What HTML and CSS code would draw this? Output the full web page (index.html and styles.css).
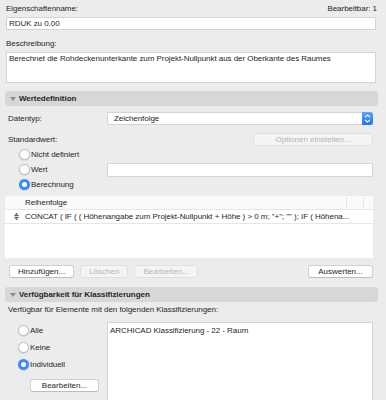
FILE: index.html
```html
<!DOCTYPE html>
<html lang="de">
<head>
    <meta charset="UTF-8">
    <title>Eigenschaft</title>
    <link rel="stylesheet" href="styles.css">
</head>
<body>
    <div class="top">
        <div class="title-row">
            <span>Eigenschaftenname:</span>
            <span>Bearbeitbar: 1</span>
        </div>
        <div class="field">RDUK zu 0.00</div>
        <div class="label">Beschreibung:</div>
        <div class="field area">Berechnet die Rohdeckenunterkante zum Projekt-Nullpunkt aus der Oberkante des Raumes</div>
    </div>

    <div class="group-head"><span class="tri"></span>Wertedefinition</div>
    <div class="group">
        <div class="form-row first">
            <span class="col-label">Datentyp:</span>
            <div class="select">
                <span>Zeichenfolge</span>
                <span class="stepper">
                    <svg width="7" height="9" viewBox="0 0 7 9"><path d="M1 3.2 L3.5 1 L6 3.2 M1 5.8 L3.5 8 L6 5.8" fill="none" stroke="#fff" stroke-width="1.1"/></svg>
                </span>
            </div>
        </div>
        <div class="form-row second">
            <span class="col-label">Standardwert:</span>
            <div class="options-slot"><button class="btn disabled wide">Optionen einstellen...</button></div>
        </div>
        <div class="radio-row">
            <span class="radio-item"><span class="radio"></span>Nicht definiert</span>
        </div>
        <div class="radio-row">
            <span class="radio-item"><span class="radio"></span>Wert</span>
            <div class="field small"></div>
        </div>
        <div class="radio-row">
            <span class="radio-item"><span class="radio on"></span>Berechnung</span>
        </div>

        <div class="table">
            <div class="table-head">
                <span class="th-name">Reihenfolge</span>
                <span class="th-sep"></span>
                <span class="th-sep"></span>
            </div>
            <div class="table-row">
                <svg class="handle" width="5" height="7" viewBox="0 0 5 7"><path d="M0.5 2.6 H4.5 M0.5 4.4 H4.5" stroke="#333" stroke-width="0.9"/><path d="M2.5 0 L4.3 1.6 H0.7 Z M2.5 7 L4.3 5.4 H0.7 Z" fill="#333"/></svg>
                <span class="cell">CONCAT ( IF ( ( Höhenangabe zum Projekt-Nullpunkt + Höhe ) &gt; 0 m; "+"; "" ); IF ( Höhena...</span>
            </div>
        </div>

        <div class="button-row">
            <button class="btn">Hinzufügen...</button>
            <button class="btn disabled">Löschen</button>
            <button class="btn disabled">Bearbeiten...</button>
            <button class="btn push">Auswerten...</button>
        </div>
    </div>

    <div class="group-head second-head"><span class="tri"></span>Verfügbarkeit für Klassifizierungen</div>
    <div class="group">
        <div class="note">Verfügbar für Elemente mit den folgenden Klassifizierungen:</div>
        <div class="avail">
            <div class="avail-left">
                <span class="radio-item tall"><span class="radio"></span>Alle</span>
                <span class="radio-item tall"><span class="radio"></span>Keine</span>
                <span class="radio-item tall"><span class="radio on"></span>Individuell</span>
                <button class="btn edit">Bearbeiten...</button>
            </div>
            <div class="listbox">ARCHICAD Klassifizierung - 22 - Raum</div>
        </div>
    </div>
</body>
</html>
```

FILE: styles.css
```css
body {
    margin: 0;
    background-color: #ececec;
    font-family: "Liberation Sans", Arial, sans-serif;
    font-size: 8px;
    letter-spacing: -0.05px;
    color: #262626;
    height: 400px;
    overflow: hidden;
}
.top {
    padding: 0 10px 0 6px;
}
.title-row {
    display: flex;
    justify-content: space-between;
    align-items: center;
    height: 16px;
}
.title-row span:last-child {
    margin-right: -1px;
}
.field {
    box-sizing: border-box;
    height: 13px;
    margin-top: 1px;
    padding: 0 2px;
    background-color: #fff;
    border: 1px solid #d4d4d4;
    line-height: 11px;
    white-space: nowrap;
    overflow: hidden;
}
.label {
    margin-top: 8px;
    line-height: 12px;
}
.field.area {
    margin-top: 2px;
    height: 31px;
    line-height: 12px;
}
.group-head {
    box-sizing: border-box;
    height: 15px;
    margin: 8px 8px 0 5px;
    padding-left: 14px;
    background-color: #d7d7d7;
    border-radius: 3px;
    font-weight: bold;
    line-height: 15px;
    position: relative;
}
.second-head {
    margin-top: 9px;
}
.tri {
    position: absolute;
    left: 5px;
    top: 6px;
    border-left: 3px solid transparent;
    border-right: 3px solid transparent;
    border-top: 4px solid #8c8c8c;
}
.group {
    padding: 0 13px 0 8px;
}
.form-row {
    display: flex;
    align-items: center;
    height: 13px;
}
.form-row.first {
    margin-top: 6px;
}
.form-row.second {
    margin-top: 8px;
}
.col-label {
    width: 99px;
    flex: none;
}
.select {
    flex: 1;
    box-sizing: border-box;
    height: 13px;
    display: flex;
    align-items: center;
    justify-content: space-between;
    padding-left: 6px;
    background-color: #fff;
    border: 1px solid #d4d4d4;
    border-right: none;
    border-radius: 2px;
}
.stepper {
    width: 11px;
    height: 13px;
    display: flex;
    align-items: center;
    justify-content: center;
    background: linear-gradient(#5aa6fb, #1f73f1);
    border-radius: 0 3px 3px 0;
}
.options-slot {
    flex: 1;
    display: flex;
    justify-content: flex-end;
}
.btn {
    box-sizing: border-box;
    height: 13px;
    padding: 0 8px;
    font-family: inherit;
    font-size: 8px;
    color: #262626;
    background-color: #fff;
    border: 1px solid #d0d0d0;
    border-bottom-color: #bdbdbd;
    border-radius: 3px;
    line-height: 11px;
}
.btn.disabled {
    color: #b4b4b4;
    background-color: #f4f4f4;
    border-color: #e0e0e0;
}
.btn.wide {
    width: 120px;
}
.radio-row {
    display: flex;
    align-items: center;
    height: 15px;
}
.radio-row:nth-of-type(3) {
    margin-top: 1px;
}
.radio-item {
    display: flex;
    align-items: center;
    width: 99px;
    flex: none;
    padding-left: 11px;
    box-sizing: border-box;
}
.radio {
    box-sizing: border-box;
    width: 11px;
    height: 11px;
    margin-right: 1px;
    border-radius: 50%;
    background-color: #fff;
    border: 1px solid #bcbcbc;
    box-shadow: 0 0.5px 1px rgba(0, 0, 0, 0.15);
}
.radio.on {
    border: 3.5px solid #3a8cf6;
}
.field.small {
    flex: 1;
    margin-top: 0;
    height: 14px;
}
.table {
    margin: 4px 0 0 -3px;
    height: 62px;
    background-color: #fff;
}
.table-head {
    display: flex;
    align-items: center;
    height: 13px;
    background-color: #fafafa;
    border-bottom: 1px solid #e6e6e6;
}
.th-name {
    flex: 1;
    padding-left: 20px;
}
.th-sep {
    width: 16px;
    height: 9px;
    border-left: 1px solid #e2e2e2;
}
.th-sep:last-child {
    width: 9px;
}
.table-row {
    display: flex;
    align-items: center;
    height: 13px;
    border-bottom: 1px solid #e6e6e6;
}
.handle {
    margin: 0 6px 0 9px;
}
.cell {
    white-space: nowrap;
}
.button-row {
    display: flex;
    gap: 6px;
    margin-top: 7px;
    padding-left: 1px;
}
.btn.push {
    margin-left: auto;
    width: 65px;
}
.note {
    margin-top: 2px;
    line-height: 12px;
}
.avail {
    display: flex;
    margin-top: 6px;
}
.avail-left {
    width: 99px;
    flex: none;
    display: flex;
    flex-direction: column;
}
.radio-item.tall {
    height: 17px;
    padding-left: 10px;
}
.btn.edit {
    width: 69px;
    margin: 6px 0 0 22px;
}
.listbox {
    flex: 1;
    height: 74px;
    padding: 2px;
    line-height: 11px;
    background-color: #fff;
    border: 1px solid #d4d4d4;
}
```
